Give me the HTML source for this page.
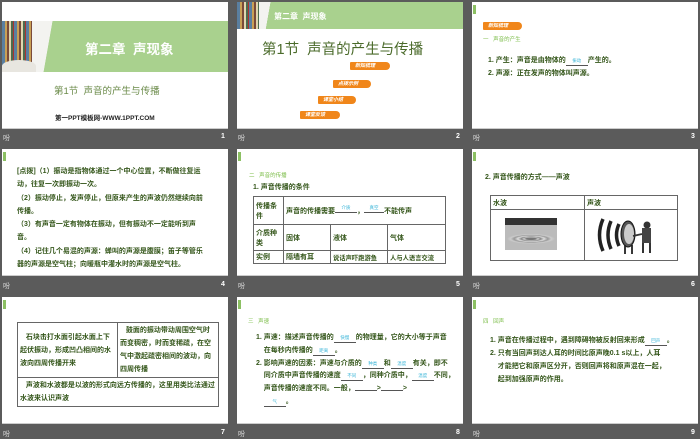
<!DOCTYPE html>
<html><head><meta charset="utf-8"><style>
*{margin:0;padding:0;box-sizing:border-box}
body{width:700px;height:438px;background:#5b5b5b;position:relative;overflow:hidden;font-family:"Liberation Sans","Noto Sans CJK SC",sans-serif}
.s{position:absolute;background:#fff;width:226px;height:127px;border-bottom:1px solid #ccc;overflow:hidden}
.a{position:absolute;white-space:nowrap}
.ft{position:absolute;color:#ddd;font-size:7px}
.nm{position:absolute;color:#fff;font-size:7px;font-weight:bold}
.tick{position:absolute;left:1px;top:3px;width:3px;height:9px;background:#8cc063}
.tag{position:absolute;height:8px;background:#f0861a;color:#fff;font-size:5px;line-height:8px;padding-left:5px;border-radius:1px 4px 4px 1px;font-style:italic;font-weight:bold}
.g{color:#34561a;font-weight:bold;font-size:7px}
.lg{color:#7dbd4a;font-size:5.5px}
.bl{color:#3ab5d8;font-size:4.5px;font-weight:normal;line-height:6px}
.u{display:inline-block;border-bottom:1px solid #555;text-align:center;vertical-align:baseline;height:8px}
table{border-collapse:collapse;position:absolute}
td{border:1px solid #666;color:#34561a;font-weight:bold;font-size:7px;padding:1px 2px;vertical-align:middle}
.books{position:absolute;background:repeating-linear-gradient(90deg,#5a7fa0 0 3px,#c9a055 3px 5px,#7a4a3a 5px 7px,#e0d6b0 7px 9px,#4d6b4d 9px 11px,#a33 11px 12px)}
</style></head><body>

<!-- slide 1 -->
<div class="s" style="left:2px;top:2px">
 <div class="a" style="left:0;top:19px;width:226px;height:51px;background:#a9d18e"></div>
 <div class="books" style="left:0;top:19px;width:36px;height:51px"></div>
 <div class="a" style="left:30px;top:19px;width:28px;height:51px;background:linear-gradient(100deg,#f3f3f0 0 55%,transparent 56%)"></div>
 <div class="a" style="left:0;top:58px;width:34px;height:12px;background:#e8e6e0;border-radius:50% 50% 0 0"></div>
 <div class="a" style="left:83px;top:36px;color:#fff;font-size:13.5px;font-weight:bold">第二章&nbsp;&nbsp;声现象</div>
 <div class="a" style="left:52px;top:81px;color:#6a8a48;font-size:9.5px">第1节&nbsp;&nbsp;声音的产生与传播</div>
 <div class="a" style="left:53px;top:110px;color:#222;font-size:6.5px;font-weight:bold">第一PPT模板网-WWW.1PPT.COM</div>
</div>
<div class="ft" style="left:3px;top:133px">吩</div><div class="nm" style="left:221px;top:133px">1</div>

<!-- slide 2 -->
<div class="s" style="left:237px;top:2px">
 <div class="a" style="left:0;top:0;width:226px;height:27px;background:#a9d18e"></div>
 <div class="books" style="left:0;top:0;width:26px;height:27px"></div>
 <div class="a" style="left:22px;top:0;width:16px;height:27px;background:linear-gradient(100deg,#f3f3f0 0 55%,transparent 56%)"></div>
 <div class="a" style="left:37px;top:9px;color:#fff;font-size:8px;font-weight:bold">第二章&nbsp;&nbsp;声现象</div>
 <div class="a" style="left:25px;top:36px;color:#4b6b2b;font-size:14.5px">第1节&nbsp;&nbsp;声音的产生与传播</div>
 <div class="tag" style="left:113px;top:60px;width:40px">新知梳理</div>
 <div class="tag" style="left:96px;top:78px;width:38px">点拨示例</div>
 <div class="tag" style="left:81px;top:94px;width:38px">课堂小结</div>
 <div class="tag" style="left:63px;top:109px;width:40px">课堂反馈</div>
</div>
<div class="ft" style="left:238px;top:133px">吩</div><div class="nm" style="left:456px;top:133px">2</div>

<!-- slide 3 -->
<div class="s" style="left:472px;top:2px">
 <div class="tick"></div>
 <div class="tag" style="left:11px;top:20px;width:39px">新知梳理</div>
 <div class="a lg" style="left:11px;top:33px">一&nbsp;&nbsp;&nbsp;声音的产生</div>
 <div class="a g" style="left:16px;top:53px">1. 产生：声音是由物体的<span class="u bl" style="width:22px">振动</span>产生的。</div>
 <div class="a g" style="left:16px;top:66px">2. 声源：正在发声的物体叫声源。</div>
</div>
<div class="ft" style="left:473px;top:133px">吩</div><div class="nm" style="left:691px;top:133px">3</div>

<!-- slide 4 -->
<div class="s" style="left:2px;top:149px">
 <div class="tick"></div>
 <div class="a g" style="left:15px;top:16px;line-height:13.3px;font-size:7px;white-space:normal;width:192px">[点拨]（1）振动是指物体通过一个中心位置，不断做往复运动，往复一次即振动一次。<br>（2）振动停止，发声停止，但原来产生的声波仍然继续向前传播。<br>（3）有声音一定有物体在振动，但有振动不一定能听到声音。<br>（4）记住几个易混的声源：蝉叫的声源是腹膜；笛子等管乐器的声源是空气柱；向暖瓶中灌水时的声源是空气柱。</div>
</div>
<div class="ft" style="left:3px;top:281px">吩</div><div class="nm" style="left:221px;top:281px">4</div>

<!-- slide 5 -->
<div class="s" style="left:237px;top:149px">
 <div class="tick"></div>
 <div class="a lg" style="left:12px;top:22px">二&nbsp;&nbsp;&nbsp;声音的传播</div>
 <div class="a g" style="left:16px;top:33px">1. 声音传播的条件</div>
 <table style="left:16px;top:47px;width:193px;height:68px">
  <tr style="height:28px"><td style="width:30px">传播条件</td><td colspan="3">声音的传播需要<span class="u bl" style="width:22px;vertical-align:4px">介质</span>，<span class="u bl" style="width:20px;vertical-align:4px">真空</span>不能传声</td></tr>
  <tr style="height:26px"><td>介质种类</td><td style="width:47px">固体</td><td style="width:57px">液体</td><td>气体</td></tr>
  <tr style="height:13px"><td>实例</td><td>隔墙有耳</td><td style="font-size:6.3px">说话声吓跑游鱼</td><td style="font-size:6.3px">人与人语言交流</td></tr>
 </table>
</div>
<div class="ft" style="left:238px;top:281px">吩</div><div class="nm" style="left:456px;top:281px">5</div>

<!-- slide 6 -->
<div class="s" style="left:472px;top:149px">
 <div class="tick"></div>
 <div class="a g" style="left:13px;top:23px">2. 声音传播的方式——声波</div>
 <table style="left:18px;top:46px;width:188px;height:66px">
  <tr style="height:14px"><td style="width:94px">水波</td><td>声波</td></tr>
  <tr><td></td><td></td></tr>
 </table>
 <div class="a" style="left:33px;top:69px;width:52px;height:32px;background:radial-gradient(ellipse 24px 5px at 50% 65%,#777 0 20%,#ccc 30%,#888 40%,#ddd 55%,#999 70%,#ccc 85%,#bbb)"></div>
 <div class="a" style="left:33px;top:69px;width:52px;height:7px;background:#333"></div>
 <svg class="a" style="left:124px;top:67px" width="62" height="38" viewBox="0 0 62 38">
  <g fill="none" stroke="#222" stroke-width="3.5"><path d="M7 3Q0 19 7 35"/><path d="M15 5Q9 19 15 33"/><path d="M23 8Q18 19 23 30"/></g>
  <ellipse cx="32" cy="18" rx="7" ry="13" fill="#555" stroke="#111"/><ellipse cx="33" cy="18" rx="5" ry="10" fill="#ccc"/>
  <path d="M29 29v9M36 29v9" stroke="#222" stroke-width="1.8"/>
  <circle cx="51" cy="9" r="3.5" fill="#333"/><rect x="46" y="12" width="9" height="15" fill="#444"/><path d="M47 27v10M54 27v10" stroke="#333" stroke-width="2"/><path d="M46 18l-9 2" stroke="#333" stroke-width="1.8"/>
 </svg>
</div>
<div class="ft" style="left:473px;top:281px">吩</div><div class="nm" style="left:691px;top:281px">6</div>

<!-- slide 7 -->
<div class="s" style="left:2px;top:297px">
 <div class="tick"></div>
 <table style="left:15px;top:25px;width:202px;height:79px">
  <tr style="height:52px"><td style="width:100px;line-height:13px">&nbsp;&nbsp;&nbsp;石块击打水面引起水面上下起伏振动，形成凹凸相间的水波向四周传播开来</td><td style="line-height:13px">&nbsp;&nbsp;&nbsp;鼓面的振动带动周围空气时而变稠密，时而变稀疏，在空气中激起疏密相间的波动，向四周传播</td></tr>
  <tr><td colspan="2" style="line-height:13px">&nbsp;&nbsp;&nbsp;声波和水波都是以波的形式向远方传播的，这里用类比法通过水波来认识声波</td></tr>
 </table>
</div>
<div class="ft" style="left:3px;top:429px">吩</div><div class="nm" style="left:221px;top:429px">7</div>

<!-- slide 8 -->
<div class="s" style="left:237px;top:297px">
 <div class="tick"></div>
 <div class="a lg" style="left:11px;top:20px">三&nbsp;&nbsp;&nbsp;声速</div>
 <div class="a g" style="left:19px;top:35px;line-height:12.8px;font-size:7px">1. 声速：描述声音传播的<span class="u bl" style="width:22px">快慢</span>的物理量，它的大小等于声音<br>&nbsp;&nbsp;&nbsp;&nbsp;在每秒内传播的<span class="u bl" style="width:22px">距离</span>。<br>2. 影响声速的因素：声速与介质的<span class="u bl" style="width:22px">种类</span>和<span class="u bl" style="width:22px">温度</span>有关，即不<br>&nbsp;&nbsp;&nbsp;&nbsp;同介质中声音传播的速度<span class="u bl" style="width:22px">不同</span>，同种介质中，<span class="u bl" style="width:22px">温度</span>不同，<br>&nbsp;&nbsp;&nbsp;&nbsp;声音传播的速度不同。一般，<span class="u" style="width:22px">&nbsp;</span>&gt;<span class="u" style="width:22px">&nbsp;</span>&gt;<br>&nbsp;&nbsp;&nbsp;&nbsp;<span class="u bl" style="width:22px">气</span>。</div>
</div>
<div class="ft" style="left:238px;top:429px">吩</div><div class="nm" style="left:456px;top:429px">8</div>

<!-- slide 9 -->
<div class="s" style="left:472px;top:297px">
 <div class="tick"></div>
 <div class="a lg" style="left:11px;top:20px">四&nbsp;&nbsp;&nbsp;回声</div>
 <div class="a g" style="left:18px;top:37px;line-height:13px;font-size:7px">1. 声音在传播过程中，遇到障碍物被反射回来形成<span class="u bl" style="width:22px">回声</span>。<br>2. 只有当回声到达人耳的时间比原声晚0.1 s以上，人耳<br>&nbsp;&nbsp;&nbsp;&nbsp;才能把它和原声区分开，否则回声将和原声混在一起，<br>&nbsp;&nbsp;&nbsp;&nbsp;起到加强原声的作用。</div>
</div>
<div class="ft" style="left:473px;top:429px">吩</div><div class="nm" style="left:691px;top:429px">9</div>

</body></html>
